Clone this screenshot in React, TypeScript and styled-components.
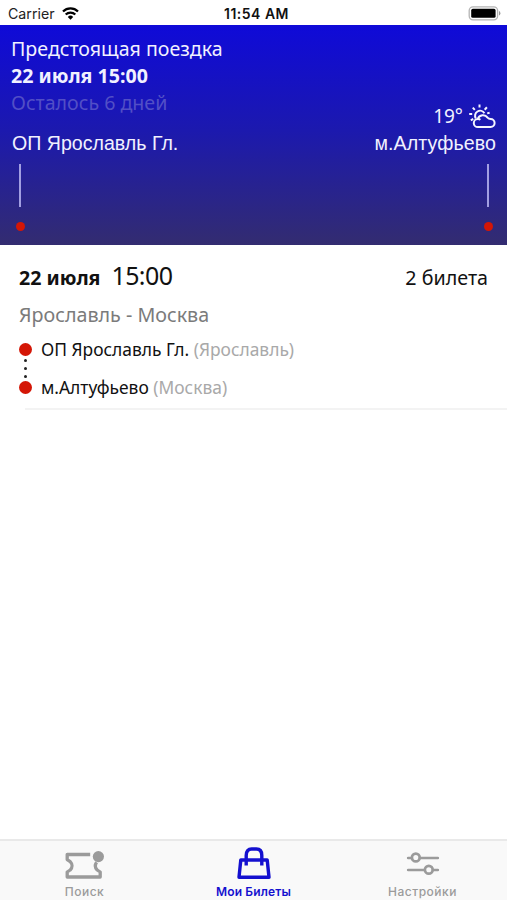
import React from "react";
import styled, { createGlobalStyle } from "styled-components";

const GlobalStyle = createGlobalStyle`
  * { box-sizing: border-box; }
  body { margin: 0; background: #fff; }
`;

const noto = `"Noto Sans", "Open Sans", sans-serif`;

const Screen = styled.div`
  display: flex;
  flex-direction: column;
  width: 507px;
  height: 900px;
  overflow: hidden;
  background: #fff;
  color: #111;
  font-family: ${noto};
  white-space: nowrap;
`;

const StatusBar = styled.header`
  display: grid;
  grid-template-columns: 1fr auto 1fr;
  align-items: center;
  flex: none;
  height: 25px;
  padding: 2px 6px 0 8px;
  font-family: Inter, sans-serif;
  font-size: 14.2px;
  color: #222;
`;

const Carrier = styled.div`
  display: flex;
  align-items: center;
  gap: 7px;
`;

const Clock = styled.div`
  padding-left: 4px;
  font-weight: 600;
  font-size: 14px;
  letter-spacing: 0.5px;
  color: #111;
`;

const BatterySlot = styled.div`
  display: flex;
  justify-content: flex-end;
`;

const Hero = styled.section`
  display: flex;
  flex-direction: column;
  flex: none;
  height: 220px;
  padding: 10px 11px 0;
  color: #f1f1ff;
  background: linear-gradient(#0f0ad8, #1c19ae 48%, #332c70);
`;

const HeroLine = styled.div<{ $tone?: "strong" | "faded" }>`
  height: 27px;
  line-height: ${(p) => (p.$tone === "strong" ? 28 : 27)}px;
  font-size: 19.6px;
  font-weight: ${(p) => (p.$tone === "strong" ? 700 : 400)};
  color: ${(p) => (p.$tone === "faded" ? "#524fc6" : "#f1f1ff")};
`;

const Weather = styled.div`
  display: flex;
  justify-content: flex-end;
  align-items: center;
  gap: 6px;
  height: 26px;
  margin-top: -12px;
  font-size: 19px;
`;

const Temperature = styled.span`
  padding-bottom: 3px;
`;

const Stations = styled.div`
  display: flex;
  justify-content: space-between;
  padding-left: 1px;
  height: 26px;
  line-height: 26px;
  font-family: "Liberation Sans", sans-serif;
  font-size: 19.6px;
`;

const Destination = styled.span`
  letter-spacing: 0.1px;
`;

const Markers = styled.div`
  display: flex;
  justify-content: space-between;
  padding: 8px 3px 0 4px;
`;

const Marker = styled.div`
  display: flex;
  flex-direction: column;
  align-items: center;
  width: 10px;
  gap: 15px;
`;

const Stem = styled.div`
  width: 2px;
  height: 43px;
  background: #a29fe2;
`;

const Dot = styled.span<{ $size: number }>`
  display: block;
  flex: none;
  width: ${(p) => p.$size}px;
  height: ${(p) => p.$size}px;
  border-radius: 50%;
  background: #d41606;
`;

const Ticket = styled.article`
  flex: none;
  height: 164px;
  padding: 13px 19px 0;
`;

const TicketHead = styled.div`
  display: flex;
  align-items: baseline;
  height: 41px;
  line-height: 34px;
`;

const TicketDate = styled.div`
  font-size: 19.6px;
  font-weight: 700;
`;

const TicketTime = styled.div`
  margin-left: 11px;
  font-size: 25px;
  letter-spacing: -0.6px;
`;

const TicketCount = styled.div`
  margin-left: auto;
  font-size: 19.7px;
`;

const Direction = styled.div`
  height: 30px;
  line-height: 31px;
  font-size: 19.7px;
  color: #7b7b7b;
`;

const Route = styled.div`
  display: flex;
  padding-top: 1px;
`;

const Rail = styled.div`
  display: flex;
  flex-direction: column;
  align-items: center;
  justify-content: space-between;
  width: 13px;
  height: 51px;
  margin: 13px 9px 0 0;
`;

const RailStep = styled.span`
  width: 3px;
  height: 3px;
  border-radius: 50%;
  background: #222;
`;

const RailSteps = styled.div`
  display: flex;
  flex-direction: column;
  gap: 5px;
`;

const Stop = styled.div`
  height: 38px;
  line-height: 39px;
  font-size: 17.4px;
`;

const City = styled.span`
  color: #a9a9a9;
`;

const Divider = styled.hr`
  flex: none;
  width: 482px;
  height: 2px;
  margin: -1px 0 0 25px;
  border: 0;
  background: #f3f3f3;
`;

const TabBar = styled.nav`
  display: grid;
  grid-template-columns: repeat(3, 1fr);
  height: 61px;
  margin-top: auto;
  border-top: 2px solid #e9e9e9;
  background: #f9f9f9;
`;

const Tab = styled.div<{ $active?: boolean }>`
  display: flex;
  flex-direction: column;
  align-items: center;
  padding-top: 5px;
  color: ${(p) => (p.$active ? "#1410cf" : "#9b9b9b")};
`;

const TabLabel = styled.span<{ $active?: boolean }>`
  margin-top: 2px;
  line-height: 16px;
  font-family: Inter, sans-serif;
  font-size: 12px;
  font-weight: ${(p) => (p.$active ? 600 : 500)};
  letter-spacing: ${(p) => (p.$active ? 0.15 : 0.5)}px;
`;

const WifiIcon = () => (
  <svg width="17" height="13" viewBox="0 0 17 13">
    <g fill="none" stroke="#000" strokeWidth="2.3">
      <path d="M1 4.5a10.8 10.8 0 0 1 15 0" />
      <path d="M3.7 7.5a7 7 0 0 1 9.6 0" />
    </g>
    <path d="M8.5 12.7 5.8 9.9a3.9 3.9 0 0 1 5.4 0Z" fill="#000" />
  </svg>
);

const BatteryIcon = () => (
  <svg width="33" height="15" viewBox="0 0 33 15">
    <rect x="1.2" y="0.8" width="28.4" height="13" rx="3.8" fill="#fff" stroke="#b4b4b4" strokeWidth="1.3" />
    <rect x="3.2" y="2.8" width="24.4" height="9" rx="1.6" fill="#000" />
    <path d="M31 5q1.4.6 1.4 2.3T31 9.6Z" fill="#999" />
  </svg>
);

const SunCloudIcon = () => (
  <svg width="27" height="26" viewBox="0 -1 27 26" fill="none" stroke="#f5f5ff" strokeWidth="2" strokeLinejoin="round">
    <path d="M10.5-.4v3M3.8 2.6l2 2.2M.2 9h3M17.9 2.3l-2.2 2.4M1.8 15.4l2.4-1.5M18.2 8.4l2.4-.6" />
    <path d="M6.8 13.4A5 5 0 1 1 15.4 8.2" />
    <path d="M9 22a4 4 0 0 1-.4-8c1.2-.2 2 .2 2.8.8M8.8 13.8A5.6 5.6 0 0 1 18.6 12.6c.8 1 1.4 1.4 3 1.4a4 4 0 1 1 0 8H9" />
  </svg>
);

const TicketIcon = () => (
  <svg width="40" height="36" viewBox="0 0 40 36">
    <path
      d="M25.2 8.5H2.2V13.6L5.2 15.6C7.6 18 7.6 21.6 5.2 24L2.2 26V31H35.2V26L32.2 24C30 21.8 29.8 18.8 31.6 16.2"
      fill="none"
      stroke="currentColor"
      strokeWidth="3.3"
      strokeLinejoin="round"
    />
    <circle cx="33.4" cy="10.6" r="5.6" fill="currentColor" />
  </svg>
);

const BagIcon = () => (
  <svg width="36" height="36" viewBox="0 0 36 36" fill="none" stroke="currentColor" strokeWidth="3.4" strokeLinejoin="round">
    <path d="M4.8 14h26.4L33 31.3H3Z" />
    <path d="M10.2 19.5V9.4c0-4 2-6.4 5.4-6.4h4.8c3.4 0 5.4 2.4 5.4 6.4v10.1" />
  </svg>
);

const SlidersIcon = () => (
  <svg width="34" height="36" viewBox="0 0 34 36" fill="none" stroke="currentColor" strokeWidth="2.7" strokeLinecap="round">
    <path d="M2.2 12h3.6M14 12H31.8M2.2 24h16.4M27 24h4.8" />
    <circle cx="9.8" cy="11.5" r="3.9" />
    <circle cx="22.8" cy="23.8" r="3.9" />
  </svg>
);

const RouteMarker = () => (
  <Marker>
    <Stem />
    <Dot $size={9} />
  </Marker>
);

export default function App() {
  return (
    <Screen>
      <GlobalStyle />
      <StatusBar>
        <Carrier>
          Carrier
          <WifiIcon />
        </Carrier>
        <Clock>11:54 AM</Clock>
        <BatterySlot>
          <BatteryIcon />
        </BatterySlot>
      </StatusBar>

      <Hero>
        <HeroLine>Предстоящая поездка</HeroLine>
        <HeroLine $tone="strong">22 июля 15:00</HeroLine>
        <HeroLine $tone="faded">Осталось 6 дней</HeroLine>
        <Weather>
          <Temperature>19°</Temperature>
          <SunCloudIcon />
        </Weather>
        <Stations>
          <span>ОП Ярославль Гл.</span>
          <Destination>м.Алтуфьево</Destination>
        </Stations>
        <Markers>
          <RouteMarker />
          <RouteMarker />
        </Markers>
      </Hero>

      <Ticket>
        <TicketHead>
          <TicketDate>22 июля</TicketDate>
          <TicketTime>15:00</TicketTime>
          <TicketCount>2 билета</TicketCount>
        </TicketHead>
        <Direction>Ярославль - Москва</Direction>
        <Route>
          <Rail>
            <Dot $size={13} />
            <RailSteps>
              <RailStep />
              <RailStep />
              <RailStep />
            </RailSteps>
            <Dot $size={13} />
          </Rail>
          <div>
            <Stop>
              ОП Ярославль Гл. <City>(Ярославль)</City>
            </Stop>
            <Stop>
              м.Алтуфьево <City>(Москва)</City>
            </Stop>
          </div>
        </Route>
      </Ticket>
      <Divider />

      <TabBar>
        <Tab>
          <TicketIcon />
          <TabLabel>Поиск</TabLabel>
        </Tab>
        <Tab $active>
          <BagIcon />
          <TabLabel $active>Мои Билеты</TabLabel>
        </Tab>
        <Tab>
          <SlidersIcon />
          <TabLabel>Настройки</TabLabel>
        </Tab>
      </TabBar>
    </Screen>
  );
}
